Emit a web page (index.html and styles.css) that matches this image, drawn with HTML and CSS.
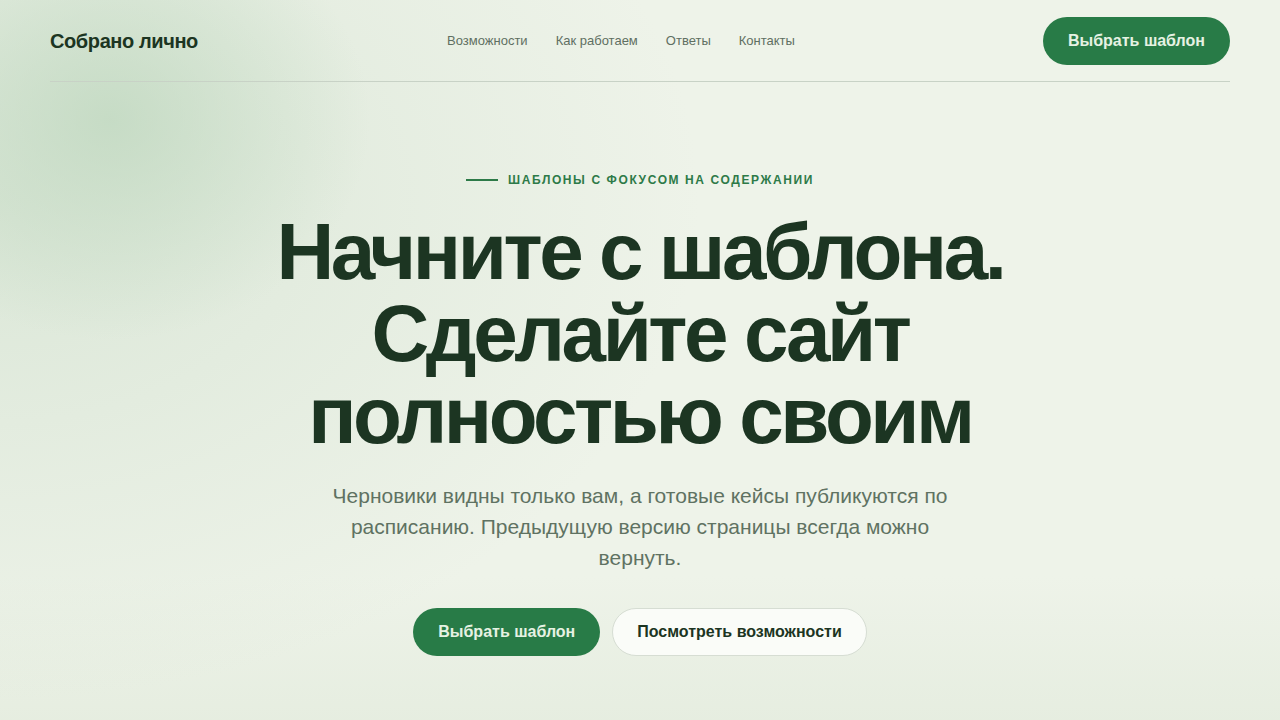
FILE: index.html
```html
<!DOCTYPE html>
<html lang="ru">
<head>
<meta charset="utf-8">
<title>Собрано лично</title>
<link rel="stylesheet" href="styles.css">
</head>
<body>
<div class="page">
  <header class="header">
    <a class="logo" href="#">Собрано лично</a>
    <nav class="nav">
      <a href="#">Возможности</a>
      <a href="#">Как работаем</a>
      <a href="#">Ответы</a>
      <a href="#">Контакты</a>
    </nav>
    <a class="btn btn-primary" href="#">Выбрать шаблон</a>
  </header>
  <main class="hero">
    <div class="eyebrow"><span class="eyebrow-line"></span>Шаблоны с фокусом на содержании</div>
    <h1 class="title">Начните с шаблона. Сделайте сайт полностью своим</h1>
    <p class="lead">Черновики видны только вам, а готовые кейсы публикуются по расписанию. Предыдущую версию страницы всегда можно вернуть.</p>
    <div class="actions">
      <a class="btn btn-primary" href="#">Выбрать шаблон</a>
      <a class="btn btn-secondary" href="#">Посмотреть возможности</a>
    </div>
  </main>
</div>
</body>
</html>
```
FILE: styles.css
```css
* { box-sizing: border-box; }
html, body { margin: 0; height: 100%; }
body {
  font-family: "Liberation Sans", Arial, sans-serif;
  background-color: #eef3e9;
  background-image:
    radial-gradient(ellipse 260px 220px at 110px 120px, rgba(190, 215, 190, 0.75), rgba(190, 215, 190, 0) 100%),
    radial-gradient(ellipse 700px 500px at 0px 200px, rgba(205, 222, 203, 0.6), rgba(205, 222, 203, 0) 100%),
    linear-gradient(180deg, rgba(238, 243, 233, 0) 80%, rgba(228, 236, 222, 0.8) 100%);
  color: #1c3522;
  overflow: hidden;
}
a { text-decoration: none; color: inherit; }
.page { padding: 0 50px; }
.header {
  display: flex;
  align-items: center;
  justify-content: space-between;
  padding: 17px 0 16px;
  border-bottom: 1px solid #c8d2c6;
}
.logo {
  font-size: 20px;
  font-weight: 700;
  color: #1c3522;
  letter-spacing: -0.4px;
  width: 187px;
}
.nav {
  display: flex;
  gap: 28px;
  font-size: 13px;
  color: #5f6f62;
  margin-right: 38px;
  margin-bottom: 1px;
}
.btn {
  display: inline-flex;
  align-items: center;
  justify-content: center;
  height: 48px;
  padding: 0 25px;
  border-radius: 24px;
  font-size: 16px;
  font-weight: 700;
}
.btn-primary {
  background: #287b47;
  color: #e6f2e3;
}
.btn-secondary {
  background: #fafcf8;
  color: #1c3522;
  border: 1px solid #d6ddd3;
  padding: 0 24px;
}
.hero {
  display: flex;
  flex-direction: column;
  align-items: center;
  text-align: center;
  padding-top: 90px;
}
.eyebrow {
  display: flex;
  align-items: center;
  gap: 10px;
  font-size: 12px;
  line-height: 16px;
  font-weight: 700;
  letter-spacing: 1.6px;
  text-transform: uppercase;
  color: #2d7a48;
  margin-bottom: 23px;
}
.eyebrow-line {
  width: 32px;
  height: 2px;
  background: #2d7a48;
}
.title {
  margin: 0;
  font-size: 80px;
  line-height: 82px;
  font-weight: 700;
  letter-spacing: -3.45px;
  max-width: 760px;
  color: #1c3522;
}
.lead {
  margin: 23px 0 0;
  font-size: 21px;
  line-height: 31px;
  max-width: 622px;
  color: #5f7262;
}
.actions {
  display: flex;
  gap: 12px;
  margin-top: 35px;
}
```
